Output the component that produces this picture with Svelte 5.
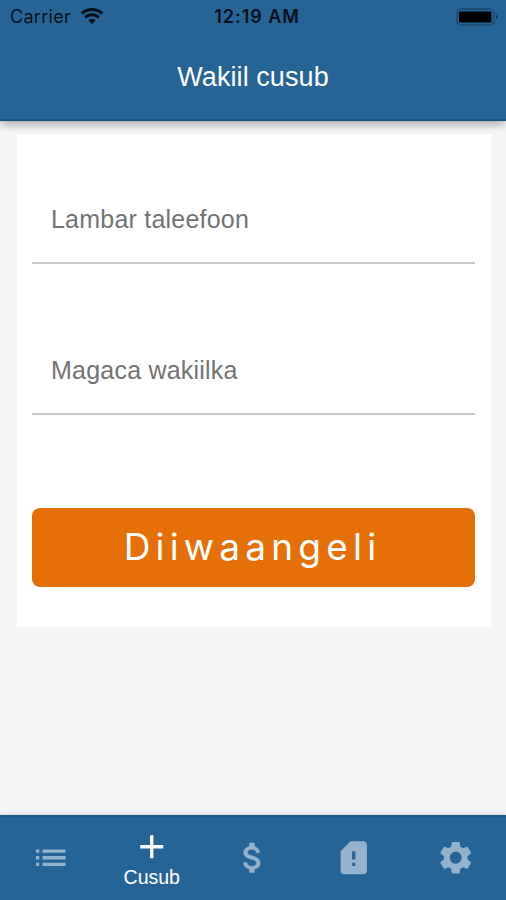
<script>
  const tabs = [
    { id: 'list', label: 'Liis', path: 'M3 13h2v-2H3v2zm0 4h2v-2H3v2zm0-8h2V7H3v2zm4 4h14v-2H7v2zm0 4h14v-2H7v2zM7 7v2h14V7H7z' },
    { id: 'new', label: 'Cusub', active: true, path: 'M19 13h-6v6h-2v-6H5v-2h6V5h2v6h6v2z' },
    { id: 'money', label: 'Lacag', path: 'M11.8 10.9c-2.27-.59-3-1.2-3-2.15 0-1.09 1.01-1.85 2.7-1.85 1.78 0 2.44.85 2.5 2.1h2.21c-.07-1.72-1.12-3.3-3.21-3.81V3h-3v2.16c-1.94.42-3.5 1.68-3.5 3.61 0 2.31 1.91 3.46 4.7 4.13 2.5.6 3 1.48 3 2.41 0 .69-.49 1.79-2.7 1.79-2.06 0-2.87-.92-2.98-2.1h-2.2c.12 2.19 1.76 3.42 3.68 3.83V21h3v-2.15c1.95-.37 3.5-1.5 3.5-3.55 0-2.84-2.43-3.81-4.7-4.4z' },
    { id: 'alert', label: 'Digniin', path: 'M18 2h-8L4.02 8 4 20c0 1.1.9 2 2 2h12c1.1 0 2-.9 2-2V4c0-1.1-.9-2-2-2zm-5 15h-2v-2h2v2zm0-4h-2V8h2v5z' },
    { id: 'settings', label: 'Dejinta', path: 'M19.14 12.94c.04-.3.06-.61.06-.94 0-.32-.02-.64-.07-.94l2.03-1.58c.18-.14.23-.41.12-.61l-1.92-3.32c-.12-.22-.37-.29-.59-.22l-2.39.96c-.5-.38-1.03-.7-1.62-.94l-.36-2.54c-.04-.24-.24-.41-.48-.41h-3.84c-.24 0-.43.17-.47.41l-.36 2.54c-.59.24-1.13.57-1.62.94l-2.39-.96c-.22-.08-.47 0-.59.22L2.74 8.87c-.12.21-.08.47.12.61l2.03 1.58c-.05.3-.09.63-.09.94s.02.64.07.94l-2.03 1.58c-.18.14-.23.41-.12.61l1.92 3.32c.12.22.37.29.59.22l2.39-.96c.5.38 1.03.7 1.62.94l.36 2.54c.05.24.24.41.48.41h3.84c.24 0 .44-.17.47-.41l.36-2.54c.59-.24 1.13-.56 1.62-.94l2.39.96c.22.08.47 0 .59-.22l1.92-3.32c.12-.22.07-.47-.12-.61l-2.01-1.58zM12 15.6c-1.98 0-3.6-1.62-3.6-3.6s1.62-3.6 3.6-3.6 3.6 1.62 3.6 3.6-1.62 3.6-3.6 3.6z' }
  ];
</script>

<div class="screen">
  <header>
    <div class="status">
      <div class="carrier">
        <span>Carrier</span>
        <svg width="24" height="18" viewBox="0 0 24 18" fill="none" stroke="#04101a" stroke-width="3.1">
          <path d="M1.8 6.6a14.6 14.6 0 0 1 20.4 0M5.3 10.5a9.4 9.4 0 0 1 13.4 0" />
          <path d="M12 17l-3.7-3.7a5.3 5.3 0 0 1 7.4 0z" fill="#04101a" stroke="none" />
        </svg>
      </div>
      <time>12:19 AM</time>
      <div class="power">
        <svg width="43" height="18" viewBox="0 0 43 18">
          <rect x="1" y="1" width="37" height="16" rx="4" fill="none" stroke="#1b4a70" stroke-width="1.4" />
          <rect x="3" y="3.4" width="32.4" height="11.2" rx="1" fill="#000" />
          <path d="M40.2 6.5q3 2.5 0 5z" fill="#102c43" />
        </svg>
      </div>
    </div>
    <h1>Wakiil cusub</h1>
  </header>

  <main>
    <form class="card" onsubmit={(e) => e.preventDefault()}>
      <label class="field phone"><span>Lambar taleefoon</span></label>
      <label class="field name"><span>Magaca wakiilka</span></label>
      <button>Diiwaangeli</button>
    </form>
  </main>

  <nav>
    {#each tabs as tab (tab.id)}
      <a href="#{tab.id}" class={tab.id} class:active={tab.active} aria-label={tab.label}>
        <svg viewBox="0 0 24 24" fill="currentColor"><path d={tab.path} /></svg>
        {#if tab.active}<span>{tab.label}</span>{/if}
      </a>
    {/each}
  </nav>
</div>

<style>
  :global(body) { margin: 0; }
  .screen {
    width: 506px;
    height: 900px;
    display: flex;
    flex-direction: column;
    overflow: hidden;
    background: #f5f5f5;
    font-family: "Liberation Sans", Arial, sans-serif;
  }
  header {
    position: relative;
    height: 121px;
    box-sizing: border-box;
    background: #276496;
    border-bottom: 2px solid #155781;
    box-shadow: 0 3px 9px rgba(0, 0, 0, .33);
  }
  .status {
    height: 33px;
    display: grid;
    grid-template-columns: 1fr auto 1fr;
    align-items: center;
    font-family: Inter, sans-serif;
    font-size: 18px;
    color: #04101a;
  }
  .carrier {
    display: flex;
    align-items: center;
    gap: 9px;
    padding-left: 10px;
    letter-spacing: .3px;
  }
  .carrier svg { display: block; margin-top: -2px; }
  time { font-weight: 600; font-size: 18px; letter-spacing: .95px; padding-left: 8px; }
  .power { display: flex; justify-content: flex-end; padding-right: 7px; }
  h1 {
    margin: 0;
    height: 86px;
    line-height: 88px;
    font-size: 27px;
    font-weight: 400;
    letter-spacing: .08px;
    text-align: center;
    color: #fff;
  }
  main { flex: 1; padding: 13px 15.5px 0 16.5px; }
  .card {
    height: 493px;
    box-sizing: border-box;
    padding: 0 15.5px;
    background: #fff;
    display: flex;
    flex-direction: column;
  }
  .field {
    box-sizing: border-box;
    border-bottom: 2px solid #c8c8c8;
    display: flex;
    align-items: flex-end;
    padding: 0 19px 28px;
    font-size: 25px;
    line-height: 30px;
    letter-spacing: .22px;
    color: #737373;
  }
  .phone { height: 130px; }
  .name { height: 151px; }
  button {
    margin: 93px 0 0;
    height: 79px;
    border: 0;
    border-radius: 8px;
    padding: 0 0 2px;
    background: #e47007;
    color: #fff;
    font: 400 37px Inter, sans-serif;
    letter-spacing: 5.2px;
    text-indent: -2px;
  }
  nav {
    height: 85px;
    box-sizing: border-box;
    border-top: 2px solid #1b5b85;
    background: #276496;
    box-shadow: 0 -1px 4px rgba(0, 0, 0, .12);
    display: grid;
    grid-template-columns: repeat(5, 1fr);
  }
  a {
    display: flex;
    flex-direction: column;
    align-items: center;
    justify-content: flex-start;
    box-sizing: border-box;
    padding-top: 21px;
    color: #93b2cb;
    text-decoration: none;
  }
  a svg { display: block; width: 39.5px; height: 39.5px; }
  .money path { stroke: currentColor; stroke-width: .3; }
  a.active { color: #fff; padding-top: 10px; }
  a span { font-size: 19.5px; line-height: 24px; margin-top: -2px; }
</style>
